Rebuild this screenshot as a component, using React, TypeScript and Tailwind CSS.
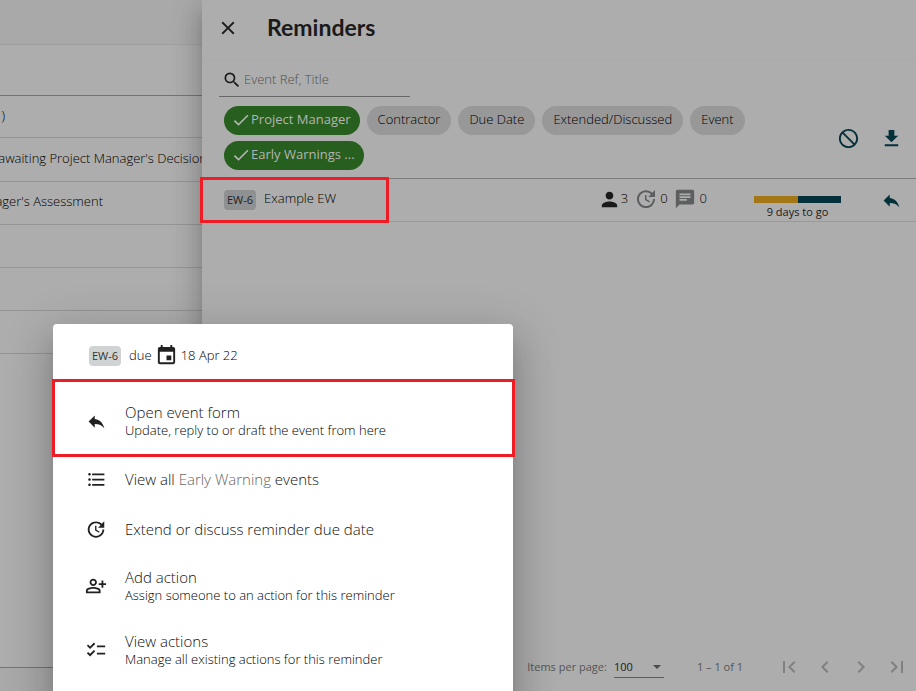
import { useState } from 'react'
import type { ReactNode } from 'react'
import {
  MdBlock,
  MdChat,
  MdCheck,
  MdChecklist,
  MdChevronLeft,
  MdChevronRight,
  MdClose,
  MdEvent,
  MdFileDownload,
  MdFirstPage,
  MdFormatListBulleted,
  MdLastPage,
  MdOutlinePersonAddAlt,
  MdPerson,
  MdReply,
  MdSearch,
  MdUpdate,
} from 'react-icons/md'

const eventRows = [
  { text: ')', height: 'h-[42px]', width: 'w-[5px]' },
  { text: "awaiting Project Manager's Decision", height: 'h-11', width: 'w-[207px]' },
  { text: "Project Manager's Assessment", height: 'h-[43px]', width: 'w-[103px]' },
  { text: '', height: 'h-[43px]', width: '' },
  { text: '', height: 'h-[43px]', width: '' },
  { text: '', height: 'h-[43px]', width: '' },
]

const filters = ['Project Manager', 'Contractor', 'Due Date', 'Extended/Discussed', 'Event', 'Early Warnings ...']

export default function App() {
  return (
    <div className="relative flex h-screen overflow-hidden bg-[#adadad] font-['Open_Sans','Noto_Sans',sans-serif] font-light text-black">
      <EventList />
      <RemindersPanel />
      <ReminderDialog />
    </div>
  )
}

function EventList() {
  return (
    <main className="flex w-[202px] shrink-0 flex-col overflow-hidden whitespace-nowrap text-[13px]">
      <div className="h-[45px] shrink-0 border-b border-[#a0a0a0] bg-[#a9a9a9]" />
      <div className="h-[51px] shrink-0 border-b border-[#747474]" />
      <ul>
        {eventRows.map((row, i) => (
          <li key={i} className={`flex items-center border-b border-[#959595] pb-[2px] ${row.height}`}>
            <span className={`flex shrink-0 justify-end ${row.width}`}>{row.text}</span>
          </li>
        ))}
      </ul>
      <div className="mt-auto h-6 shrink-0 border-t border-[#747474] bg-[#a9a9a9]" />
    </main>
  )
}

function RemindersPanel() {
  const [active, setActive] = useState(['Project Manager', 'Early Warnings ...'])

  function toggle(name: string) {
    setActive(active.includes(name) ? active.filter((f) => f !== name) : [...active, name])
  }

  return (
    <section className="flex min-w-0 flex-1 flex-col bg-[#adadad] shadow-[0_8px_10px_-5px_rgba(0,0,0,0.2),0_16px_24px_2px_rgba(0,0,0,0.14),0_6px_30px_5px_rgba(0,0,0,0.12)]">
      <header className="flex h-15 shrink-0 items-center gap-7 border-b border-[#aaaaaa] pb-1 pl-[15px] text-[#1a1a1a]">
        <button aria-label="Close">
          <MdClose size={22} />
        </button>
        <h1 className="font-['Lato'] text-[23px] font-bold">Reminders</h1>
      </header>

      <div className="border-b border-[#7c7c7c] pb-2">
        <label className="mx-[17px] flex h-[37px] w-[191px] items-center gap-[2px] border-b border-[#666666] pt-[3px] pl-[3px]">
          <MdSearch size={20} className="shrink-0 text-[#1a1a1a]" />
          <input
            aria-label="Search reminders"
            placeholder="Event Ref, Title"
            className="w-full bg-transparent text-[13px] outline-none placeholder:text-[#505050]"
          />
        </label>
        <div className="flex items-center pt-[9px] pr-[13px] pl-[22px]">
          <div className="flex max-w-[530px] flex-wrap gap-x-[7px] gap-y-[6px]">
            {filters.map((name) => {
              const on = active.includes(name)
              return (
                <button
                  key={name}
                  aria-pressed={on}
                  onClick={() => toggle(name)}
                  className={`flex h-[29px] items-center rounded-full pb-[2px] text-[13px] ${
                    on ? 'bg-[#265f1e] pr-[9px] pl-[7px] font-medium text-[#b4b4b4]' : 'bg-[#989898] px-[11px]'
                  }`}
                >
                  {on && <MdCheck size={20} />}
                  {name}
                </button>
              )
            })}
          </div>
          <div className="ml-auto flex items-center gap-5 text-[#04303b]">
            <button aria-label="Clear filters">
              <MdBlock size={23} className="-scale-x-100" />
            </button>
            <button aria-label="Download">
              <MdFileDownload size={23} />
            </button>
          </div>
        </div>
      </div>

      <div className="flex h-[43px] shrink-0 items-center border-b border-[#999999] pr-[14px] pl-[22px] text-[13px]">
        <span className="rounded bg-[#8e9091] px-[3px] text-[11px] leading-5 font-normal text-[#222222]">EW-6</span>
        <span className="mb-[2px] ml-2">Example EW</span>
        <div className="mb-[2px] ml-auto flex items-center">
          <MdPerson size={23} className="text-[#1a1a1a]" />
          <span>3</span>
          <MdUpdate size={24} className="ml-[6px] text-[#5c5e5f]" />
          <span className="ml-[2px]">0</span>
          <MdChat size={22} className="ml-[6px] text-[#5c5e5f]" />
          <span className="ml-1">0</span>
        </div>
        <div className="mt-[15px] ml-[47px] w-[87px] text-center text-[11px] leading-4 font-normal text-[#1a1a1a]">
          <div className="mb-[1px] flex h-[7px] bg-[#03303a]">
            <div className="w-1/2 bg-[#a37716]" />
          </div>
          9 days to go
        </div>
        <button aria-label="Open event form" className="ml-10 text-[#04303b]">
          <MdReply size={21} />
        </button>
      </div>

      <footer className="mt-auto flex h-12 items-center justify-end pr-[7px] text-[11px] font-normal text-[#555555]">
        <label htmlFor="page-size">Items per page:</label>
        <div className="relative ml-[7px] w-[50px] border-b border-[#5c5c5c]">
          <select id="page-size" className="w-full appearance-none bg-transparent text-[11px] leading-5 text-[#1c1c1c]">
            <option>100</option>
          </select>
          <span className="pointer-events-none absolute top-2 right-[3px] border-x-4 border-t-4 border-x-transparent border-t-[#4c4c4c]" />
        </div>
        <span className="mr-[34px] ml-[33px]">1 – 1 of 1</span>
        <div className="flex gap-3 text-[#808080]">
          <button aria-label="First page">
            <MdFirstPage size={24} />
          </button>
          <button aria-label="Previous page">
            <MdChevronLeft size={24} />
          </button>
          <button aria-label="Next page">
            <MdChevronRight size={24} />
          </button>
          <button aria-label="Last page">
            <MdLastPage size={24} />
          </button>
        </div>
      </footer>

      {/* highlight round the reminder row */}
      <div className="pointer-events-none absolute top-[177px] left-[200px] h-[46px] w-[189px] border-3 border-[#ee1c25]" />
    </section>
  )
}

function ReminderDialog() {
  return (
    <div
      role="dialog"
      aria-label="EW-6"
      className="absolute top-[324px] left-[53px] w-[460px] rounded bg-white pb-8 shadow-[0_11px_15px_-7px_rgba(0,0,0,0.2),0_24px_38px_3px_rgba(0,0,0,0.14),0_9px_46px_8px_rgba(0,0,0,0.12)]"
    >
      <div className="flex h-16 items-center pl-9 text-[13px]">
        <span className="rounded bg-[#cfd3d4] px-[3px] text-[11px] leading-5 font-normal text-[#333333]">EW-6</span>
        <span className="ml-2">due</span>
        <MdEvent size={23} className="mx-[3px] mb-[2px] text-[#212121]" />
        <span>18 Apr 22</span>
      </div>
      <MenuItem
        icon={<MdReply size={21} />}
        title="Open event form"
        detail="Update, reply to or draft the event from here"
        height="h-[66px]"
      />
      <MenuItem
        icon={<MdFormatListBulleted size={21} />}
        title={
          <>
            View all <span className="text-[#666666]">Early Warning</span> events
          </>
        }
        height="h-[50px]"
      />
      <MenuItem icon={<MdUpdate size={23} />} title="Extend or discuss reminder due date" height="h-[50px]" />
      <MenuItem
        icon={<MdOutlinePersonAddAlt size={22} />}
        title="Add action"
        detail="Assign someone to an action for this reminder"
        height="h-16"
      />
      <MenuItem
        icon={<MdChecklist size={22} />}
        title="View actions"
        detail="Manage all existing actions for this reminder"
        height="h-16"
      />
      {/* highlight round the first action */}
      <div className="pointer-events-none absolute top-[55px] -left-px h-[78px] w-[463px] border-3 border-[#ee1c25]" />
    </div>
  )
}

function MenuItem({ icon, title, detail, height }: { icon: ReactNode; title: ReactNode; detail?: string; height: string }) {
  return (
    <button className={`flex w-full items-center pl-8 text-left ${height}`}>
      <span className="flex w-[22px] justify-center text-[#212121]">{icon}</span>
      <span className="ml-[18px]">
        <span className="block text-[15px] leading-[18px] text-[#111111]">{title}</span>
        {detail && <span className="block text-[13px] leading-[18px]">{detail}</span>}
      </span>
    </button>
  )
}
